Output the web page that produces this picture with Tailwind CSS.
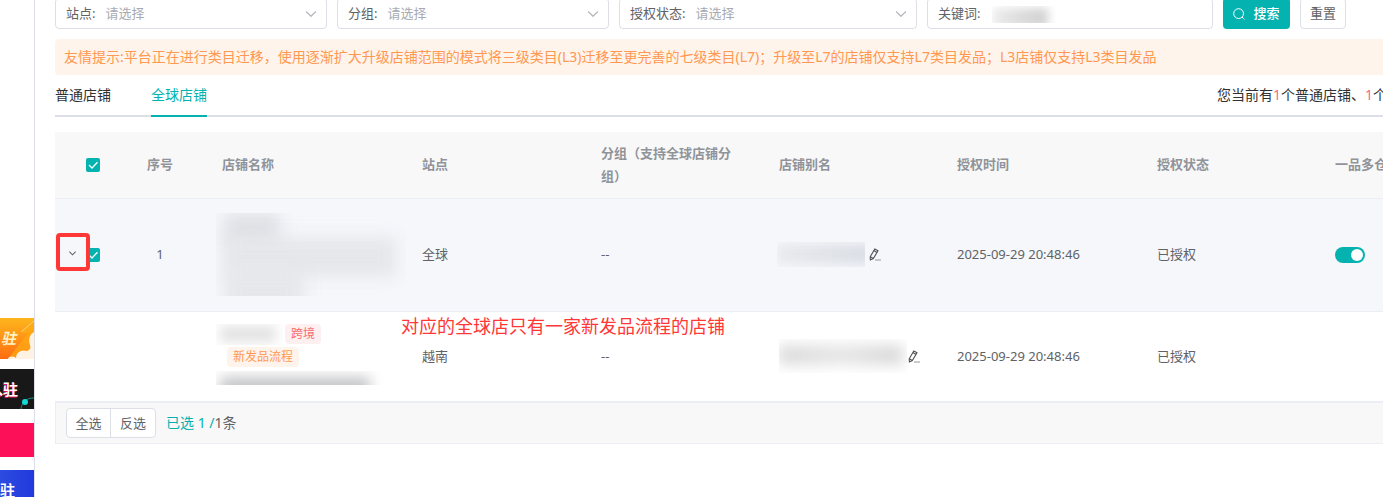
<!DOCTYPE html>
<html lang="zh-CN">
<head>
  <meta charset="UTF-8">
  <meta name="viewport" content="width=device-width, initial-scale=1.0">
  <title>店铺授权</title>
  <script src="https://cdn.jsdelivr.net/npm/@tailwindcss/browser@4"></script>
</head>
<body class="flex h-screen overflow-hidden bg-white font-['Noto_Sans','Noto_Sans_CJK_SC',sans-serif] text-[13px] leading-[23px] text-[#606266]">

  <!-- side banners -->
  <aside class="w-[35px] shrink-0 border-r border-[#dcdfe6] pt-[318px] text-[15px] font-bold text-white">
    <a href="#" class="relative flex h-[41px] items-center overflow-hidden bg-linear-to-b from-[#fdb51c] to-[#ff6b12] pl-px italic text-[#fff3c8]">
      <svg class="absolute inset-0" width="34" height="41" viewBox="0 0 34 41">
        <path d="M34 0V41H8L28 15H20L34 3Z" fill="#ffab14" opacity=".7"/>
        <path d="M21 14L34 3" stroke="#ffd27a" stroke-width="1"/>
        <path d="M8 41C9 38 13 38 16 40C16 34 22 31 27 33C30 32 31 30 30 27C28 21 30 16 34 14V41Z" fill="#fff2e2"/>
      </svg>
      <span class="relative">驻</span>
    </a>
    <a href="#" class="relative mt-2.5 flex h-10 items-center justify-end overflow-hidden bg-[#181818] pr-4">
      <svg class="absolute inset-0" width="34" height="40" viewBox="0 0 34 40">
        <path d="M21 40C22 33 26 29 34 29" fill="none" stroke="#0e8f8a" stroke-width="1"/>
        <circle cx="25" cy="33" r="3" fill="#15d8d2"/>
      </svg>
      <span class="relative shrink-0 text-shadow-[-1px_1px_0_#e0134f]">入驻</span>
    </a>
    <a href="#" aria-label="活动" class="mt-3.5 block h-[34px] bg-[#fc1058]"></a>
    <a href="#" class="mt-[13px] flex h-10 items-center bg-linear-to-r from-[#2d4be0] to-[#2039dc]">驻</a>
  </aside>

  <main class="min-w-0 flex-1 overflow-hidden pl-5">
    <div class="min-w-[1448px]">

      <!-- filters -->
      <form class="-mt-0.5 flex gap-2.5">
        <div class="flex h-[31px] w-[272px] items-center rounded border border-[#dcdfe6] px-2.5">
          <label for="site">站点:</label>
          <select id="site" class="ml-2.5 flex-1 appearance-none text-[#a8abb2] outline-none"><option>请选择</option></select>
          <svg class="pointer-events-none" width="10" height="6" viewBox="0 0 10 6" fill="none" stroke="#b0b3b9" stroke-width="1.2"><path d="M0 0.5L5 5.3L10 0.5"/></svg>
        </div>
        <div class="flex h-[31px] w-[272px] items-center rounded border border-[#dcdfe6] px-2.5">
          <label for="group">分组:</label>
          <select id="group" class="ml-2.5 flex-1 appearance-none text-[#a8abb2] outline-none"><option>请选择</option></select>
          <svg class="pointer-events-none" width="10" height="6" viewBox="0 0 10 6" fill="none" stroke="#b0b3b9" stroke-width="1.2"><path d="M0 0.5L5 5.3L10 0.5"/></svg>
        </div>
        <div class="flex h-[31px] w-[298px] items-center rounded border border-[#dcdfe6] px-2.5">
          <label for="status">授权状态:</label>
          <select id="status" class="ml-2.5 flex-1 appearance-none text-[#a8abb2] outline-none"><option>请选择</option></select>
          <svg class="pointer-events-none" width="10" height="6" viewBox="0 0 10 6" fill="none" stroke="#b0b3b9" stroke-width="1.2"><path d="M0 0.5L5 5.3L10 0.5"/></svg>
        </div>
        <div class="relative flex h-[31px] w-[286px] items-center rounded border border-[#dcdfe6] px-2.5">
          <label for="keyword">关键词:</label>
          <input id="keyword" type="text" class="ml-2.5 min-w-0 flex-1 outline-none">
          <div class="absolute left-16 top-[7px] h-[17px] w-[70px] overflow-hidden">
            <div class="mt-0.5 h-5 w-14 bg-linear-to-r from-[#eeeeee] via-[#dcdcdc] to-[#d0d0d0] blur-[5px]"></div>
          </div>
        </div>
        <button type="button" class="flex h-[31px] w-[67px] items-center justify-center gap-2 rounded bg-[#04b2b0] font-medium text-white">
          <svg width="12" height="12" viewBox="0 0 12 12" fill="none" stroke="currentColor" stroke-width="1"><circle cx="5.6" cy="5.6" r="4.9"/><path d="M9 9L11.4 11.4"/></svg>
          搜索
        </button>
        <button type="button" class="h-[31px] w-[46px] rounded border border-[#dcdfe6]">重置</button>
      </form>

      <p class="mt-2.5 h-9 rounded bg-[#fff4eb] px-[9px] text-sm leading-9 text-[#ff9850]">友情提示:平台正在进行类目迁移，使用逐渐扩大升级店铺范围的模式将三级类目(L3)迁移至更完善的七级类目(L7)；升级至L7的店铺仅支持L7类目发品；L3店铺仅支持L3类目发品</p>

      <!-- tabs -->
      <div class="flex h-[42px] border-b-2 border-[#dcdfe6] text-sm leading-10 text-[#303133]">
        <button type="button" class="h-[42px] pb-0.5">普通店铺</button>
        <button type="button" class="ml-10 h-[42px] border-b-2 border-[#04b2b0] text-[#04b2b0]">全球店铺</button>
        <p class="ml-auto pr-15">您当前有<span class="text-[#f56c84]">1</span>个普通店铺、<span class="text-[#f56c84]">1</span>个全球店铺</p>
      </div>

      <table class="mt-[15px] w-full table-fixed border-collapse text-left">
        <colgroup>
          <col class="w-[53px]">
          <col class="w-[104px]">
          <col class="w-[200px]">
          <col class="w-[179px]">
          <col class="w-[178px]">
          <col class="w-[178px]">
          <col class="w-[200px]">
          <col class="w-[178px]">
          <col>
        </colgroup>
        <thead class="bg-[#f8f8f8] text-[#909399]">
          <tr class="h-[66px] border-b border-[#ebeef5]">
            <th>
              <label class="ml-[31px] grid size-3.5 text-white" aria-label="全选">
                <input type="checkbox" checked class="col-start-1 row-start-1 size-3.5 appearance-none rounded-xs bg-[#04b2b0]">
                <svg class="pointer-events-none col-start-1 row-start-1" width="14" height="14" viewBox="0 0 14 14" fill="none" stroke="currentColor" stroke-width="1.3"><path d="M3 7L6 10L11.5 4.2"/></svg>
              </label>
            </th>
            <th class="text-center">序号</th>
            <th class="px-2.5">店铺名称</th>
            <th class="px-2.5">站点</th>
            <th class="pl-2.5 pr-8">分组（支持全球店铺分组）</th>
            <th class="px-2.5">店铺别名</th>
            <th class="px-2.5">授权时间</th>
            <th class="px-2.5">授权状态</th>
            <th class="px-2.5">一品多仓</th>
          </tr>
        </thead>
        <tbody>
          <tr class="h-[113px] border-b border-[#ebeef5] bg-[#f5f7fb]">
            <td class="relative">
              <label class="ml-[31px] grid size-3.5 text-white" aria-label="选择">
                <input type="checkbox" checked class="col-start-1 row-start-1 size-3.5 appearance-none rounded-xs bg-[#04b2b0]">
                <svg class="pointer-events-none col-start-1 row-start-1" width="14" height="14" viewBox="0 0 14 14" fill="none" stroke="currentColor" stroke-width="1.3"><path d="M3 7L6 10L11.5 4.2"/></svg>
              </label>
              <button type="button" aria-label="展开" class="absolute left-px top-[34px] flex h-[38px] w-[34px] items-center justify-center rounded border-4 border-[#ff3737] bg-[#f5f7fb] pr-0.5 pt-1">
                <svg width="7" height="5" viewBox="0 0 7 5" fill="none" stroke="#606266" stroke-width="1.1"><path d="M0.3 0.6L3.5 3.8L6.7 0.6"/></svg>
              </button>
            </td>
            <td class="text-center">1</td>
            <td class="pl-1">
              <div class="h-[83px] w-[190px] overflow-hidden">
                <div class="ml-2 h-9 w-14 bg-[#dfe1e5] blur-[8px]"></div>
                <div class="-mt-3 ml-2 h-10 w-[172px] bg-[#e5e7ea] blur-[8px]"></div>
                <div class="-mt-2 ml-2 h-10 w-20 bg-[#e5e7ea] blur-[8px]"></div>
              </div>
            </td>
            <td class="px-2.5">全球</td>
            <td class="px-2.5">--</td>
            <td class="pl-2">
              <div class="flex items-center gap-1">
                <div class="h-[25px] w-[88px] overflow-hidden">
                  <div class="mt-0.5 h-5 w-24 bg-linear-to-r from-[#e8e9ec] to-[#d8dce3] blur-[6px]"></div>
                </div>
                <button type="button" aria-label="编辑别名">
                  <svg width="12" height="13" viewBox="0 0 12 13" fill="none" stroke="#505256" stroke-width="1.1"><path d="M5.8 1L9 2.7L4.3 10.6L1.4 12L1.2 8.8Z"/><path d="M4.9 2.6L8 4.4M1.3 8.8L4.2 10.5"/><path d="M6 12H12" stroke="#a0a2a6"/></svg>
                </button>
              </div>
            </td>
            <td class="px-2.5">2025-09-29 20:48:46</td>
            <td class="px-2.5">已授权</td>
            <td class="px-2.5">
              <input type="checkbox" role="switch" checked aria-label="一品多仓" class="flex h-4 w-[30px] appearance-none items-center justify-end rounded-full bg-[#04b2b0] px-0.5 before:size-3 before:rounded-full before:bg-white">
            </td>
          </tr>
          <tr class="h-[90px]">
            <td></td>
            <td></td>
            <td class="pb-1 pl-1">
              <div class="flex items-center gap-0.5">
                <div class="h-[21px] w-[67px] overflow-hidden">
                  <div class="ml-1 mt-0.5 h-4 w-14 bg-[#e2e2e2] blur-[6px]"></div>
                </div>
                <span class="rounded bg-[#fef0f0] px-1.5 text-xs leading-5 text-[#f56c6c]">跨境</span>
              </div>
              <span class="ml-[11px] mt-0.5 flex w-max rounded bg-[#fff4eb] px-1.5 text-xs leading-5 text-[#ff9850]">新发品流程</span>
              <div class="mt-1 h-3.5 w-[170px] overflow-hidden">
                <div class="ml-1 mt-1.5 h-5 w-[150px] bg-[#c4c5c8] blur-[7px]"></div>
              </div>
            </td>
            <td class="relative px-2.5">
              <span class="absolute -left-[11px] top-0.5 whitespace-nowrap text-lg leading-6 text-[#ff3737]">对应的全球店只有一家新发品流程的店铺</span>
              越南
            </td>
            <td class="px-2.5">--</td>
            <td class="pl-2.5">
              <div class="flex items-center gap-px">
                <div class="h-[34px] w-32 overflow-hidden">
                  <div class="mt-1.5 h-5 w-[124px] bg-linear-to-r from-[#dadada] via-[#e6e6e6] to-[#d8d8d8] blur-[7px]"></div>
                </div>
                <button type="button" aria-label="编辑别名">
                  <svg width="12" height="13" viewBox="0 0 12 13" fill="none" stroke="#505256" stroke-width="1.1"><path d="M5.8 1L9 2.7L4.3 10.6L1.4 12L1.2 8.8Z"/><path d="M4.9 2.6L8 4.4M1.3 8.8L4.2 10.5"/><path d="M6 12H12" stroke="#a0a2a6"/></svg>
                </button>
              </div>
            </td>
            <td class="px-2.5">2025-09-29 20:48:46</td>
            <td class="px-2.5">已授权</td>
            <td></td>
          </tr>
        </tbody>
      </table>

      <!-- batch bar -->
      <div class="flex h-[43px] items-center border border-t-2 border-[#ebeef5] bg-[#f8f8f8] px-2.5">
        <div class="flex h-[30px] rounded border border-[#dcdfe6] bg-white">
          <button type="button" class="w-11 border-r border-[#dcdfe6]">全选</button>
          <button type="button" class="w-11">反选</button>
        </div>
        <p class="ml-2.5 text-sm"><span class="text-[#04b2b0]">已选 1 /</span>1条</p>
      </div>
    </div>
  </main>
</body>
</html>
